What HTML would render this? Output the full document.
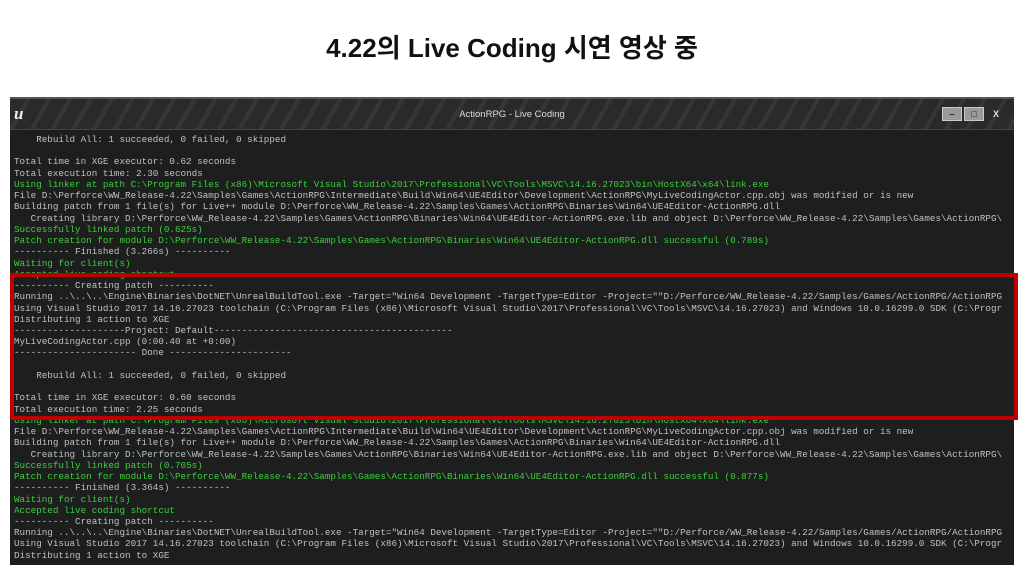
<!DOCTYPE html>
<html><head><meta charset="utf-8"><style>
body{margin:0;width:1024px;height:576px;background:#fff;position:relative;overflow:hidden}
h1{position:absolute;top:28px;left:0;width:1024px;text-align:center;margin:0;font:bold 26px "Liberation Sans","Noto Sans CJK KR",sans-serif;color:#111}
.win{position:absolute;left:10px;top:97px;width:1004px;height:466px;background:#1d1e1e;border-top:2px solid #555;overflow:hidden}
.tb{position:absolute;left:0;top:0;width:1004px;height:30px;background:repeating-linear-gradient(120deg,#2a2a2a 0 14px,#363636 14px 18px);border-bottom:1px solid #444}
.tt{position:absolute;left:0;width:1004px;top:10px;text-align:center;font:9.5px "Liberation Sans",sans-serif;color:#ddd}
.logo{position:absolute;left:4px;top:5px;font:bold italic 17px "Liberation Serif",serif;color:#eee}
.btns{position:absolute;right:8px;top:8px;display:flex;gap:2px}
.btns div{width:18px;height:12px;background:#9a9a9a;border:1px solid #ccc;font:bold 9px "Liberation Sans";color:#222;text-align:center;line-height:12px}
pre{position:absolute;left:4px;top:35px;margin:0;font:9.25px/11.24px "Liberation Mono",monospace;color:#c0c0c0;white-space:pre}
.g{color:#3ccf3c}
.red{position:absolute;left:10px;top:273px;width:1000px;height:139px;border:4px solid #c00000}
</style></head><body>
<h1>4.22의 Live Coding 시연 영상 중</h1>
<div class="win">
<div class="tb"><div class="logo">u</div><div class="tt">ActionRPG - Live Coding</div><div class="btns"><div>–</div><div>□</div><div style="background:transparent;border-color:transparent;color:#ddd">X</div></div></div>
<pre>    Rebuild All: 1 succeeded, 0 failed, 0 skipped

Total time in XGE executor: 0.62 seconds
Total execution time: 2.30 seconds
<span class="g">Using linker at path C:\Program Files (x86)\Microsoft Visual Studio\2017\Professional\VC\Tools\MSVC\14.16.27023\bin\HostX64\x64\link.exe</span>
File D:\Perforce\WW_Release-4.22\Samples\Games\ActionRPG\Intermediate\Build\Win64\UE4Editor\Development\ActionRPG\MyLiveCodingActor.cpp.obj was modified or is new
Building patch from 1 file(s) for Live++ module D:\Perforce\WW_Release-4.22\Samples\Games\ActionRPG\Binaries\Win64\UE4Editor-ActionRPG.dll
   Creating library D:\Perforce\WW_Release-4.22\Samples\Games\ActionRPG\Binaries\Win64\UE4Editor-ActionRPG.exe.lib and object D:\Perforce\WW_Release-4.22\Samples\Games\ActionRPG\
<span class="g">Successfully linked patch (0.625s)</span>
<span class="g">Patch creation for module D:\Perforce\WW_Release-4.22\Samples\Games\ActionRPG\Binaries\Win64\UE4Editor-ActionRPG.dll successful (0.789s)</span>
---------- Finished (3.266s) ----------
<span class="g">Waiting for client(s)</span>
<span class="g">Accepted live coding shortcut</span>
---------- Creating patch ----------
Running ..\..\..\Engine\Binaries\DotNET\UnrealBuildTool.exe -Target="Win64 Development -TargetType=Editor -Project=""D:/Perforce/WW_Release-4.22/Samples/Games/ActionRPG/ActionRPG
Using Visual Studio 2017 14.16.27023 toolchain (C:\Program Files (x86)\Microsoft Visual Studio\2017\Professional\VC\Tools\MSVC\14.16.27023) and Windows 10.0.16299.0 SDK (C:\Progr
Distributing 1 action to XGE
--------------------Project: Default-------------------------------------------
MyLiveCodingActor.cpp (0:00.40 at +0:00)
---------------------- Done ----------------------

    Rebuild All: 1 succeeded, 0 failed, 0 skipped

Total time in XGE executor: 0.60 seconds
Total execution time: 2.25 seconds
<span class="g">Using linker at path C:\Program Files (x86)\Microsoft Visual Studio\2017\Professional\VC\Tools\MSVC\14.16.27023\bin\HostX64\x64\link.exe</span>
File D:\Perforce\WW_Release-4.22\Samples\Games\ActionRPG\Intermediate\Build\Win64\UE4Editor\Development\ActionRPG\MyLiveCodingActor.cpp.obj was modified or is new
Building patch from 1 file(s) for Live++ module D:\Perforce\WW_Release-4.22\Samples\Games\ActionRPG\Binaries\Win64\UE4Editor-ActionRPG.dll
   Creating library D:\Perforce\WW_Release-4.22\Samples\Games\ActionRPG\Binaries\Win64\UE4Editor-ActionRPG.exe.lib and object D:\Perforce\WW_Release-4.22\Samples\Games\ActionRPG\
<span class="g">Successfully linked patch (0.705s)</span>
<span class="g">Patch creation for module D:\Perforce\WW_Release-4.22\Samples\Games\ActionRPG\Binaries\Win64\UE4Editor-ActionRPG.dll successful (0.877s)</span>
---------- Finished (3.364s) ----------
<span class="g">Waiting for client(s)</span>
<span class="g">Accepted live coding shortcut</span>
---------- Creating patch ----------
Running ..\..\..\Engine\Binaries\DotNET\UnrealBuildTool.exe -Target="Win64 Development -TargetType=Editor -Project=""D:/Perforce/WW_Release-4.22/Samples/Games/ActionRPG/ActionRPG
Using Visual Studio 2017 14.16.27023 toolchain (C:\Program Files (x86)\Microsoft Visual Studio\2017\Professional\VC\Tools\MSVC\14.16.27023) and Windows 10.0.16299.0 SDK (C:\Progr
Distributing 1 action to XGE</pre>
</div>
<div class="red"></div>
</body></html>
